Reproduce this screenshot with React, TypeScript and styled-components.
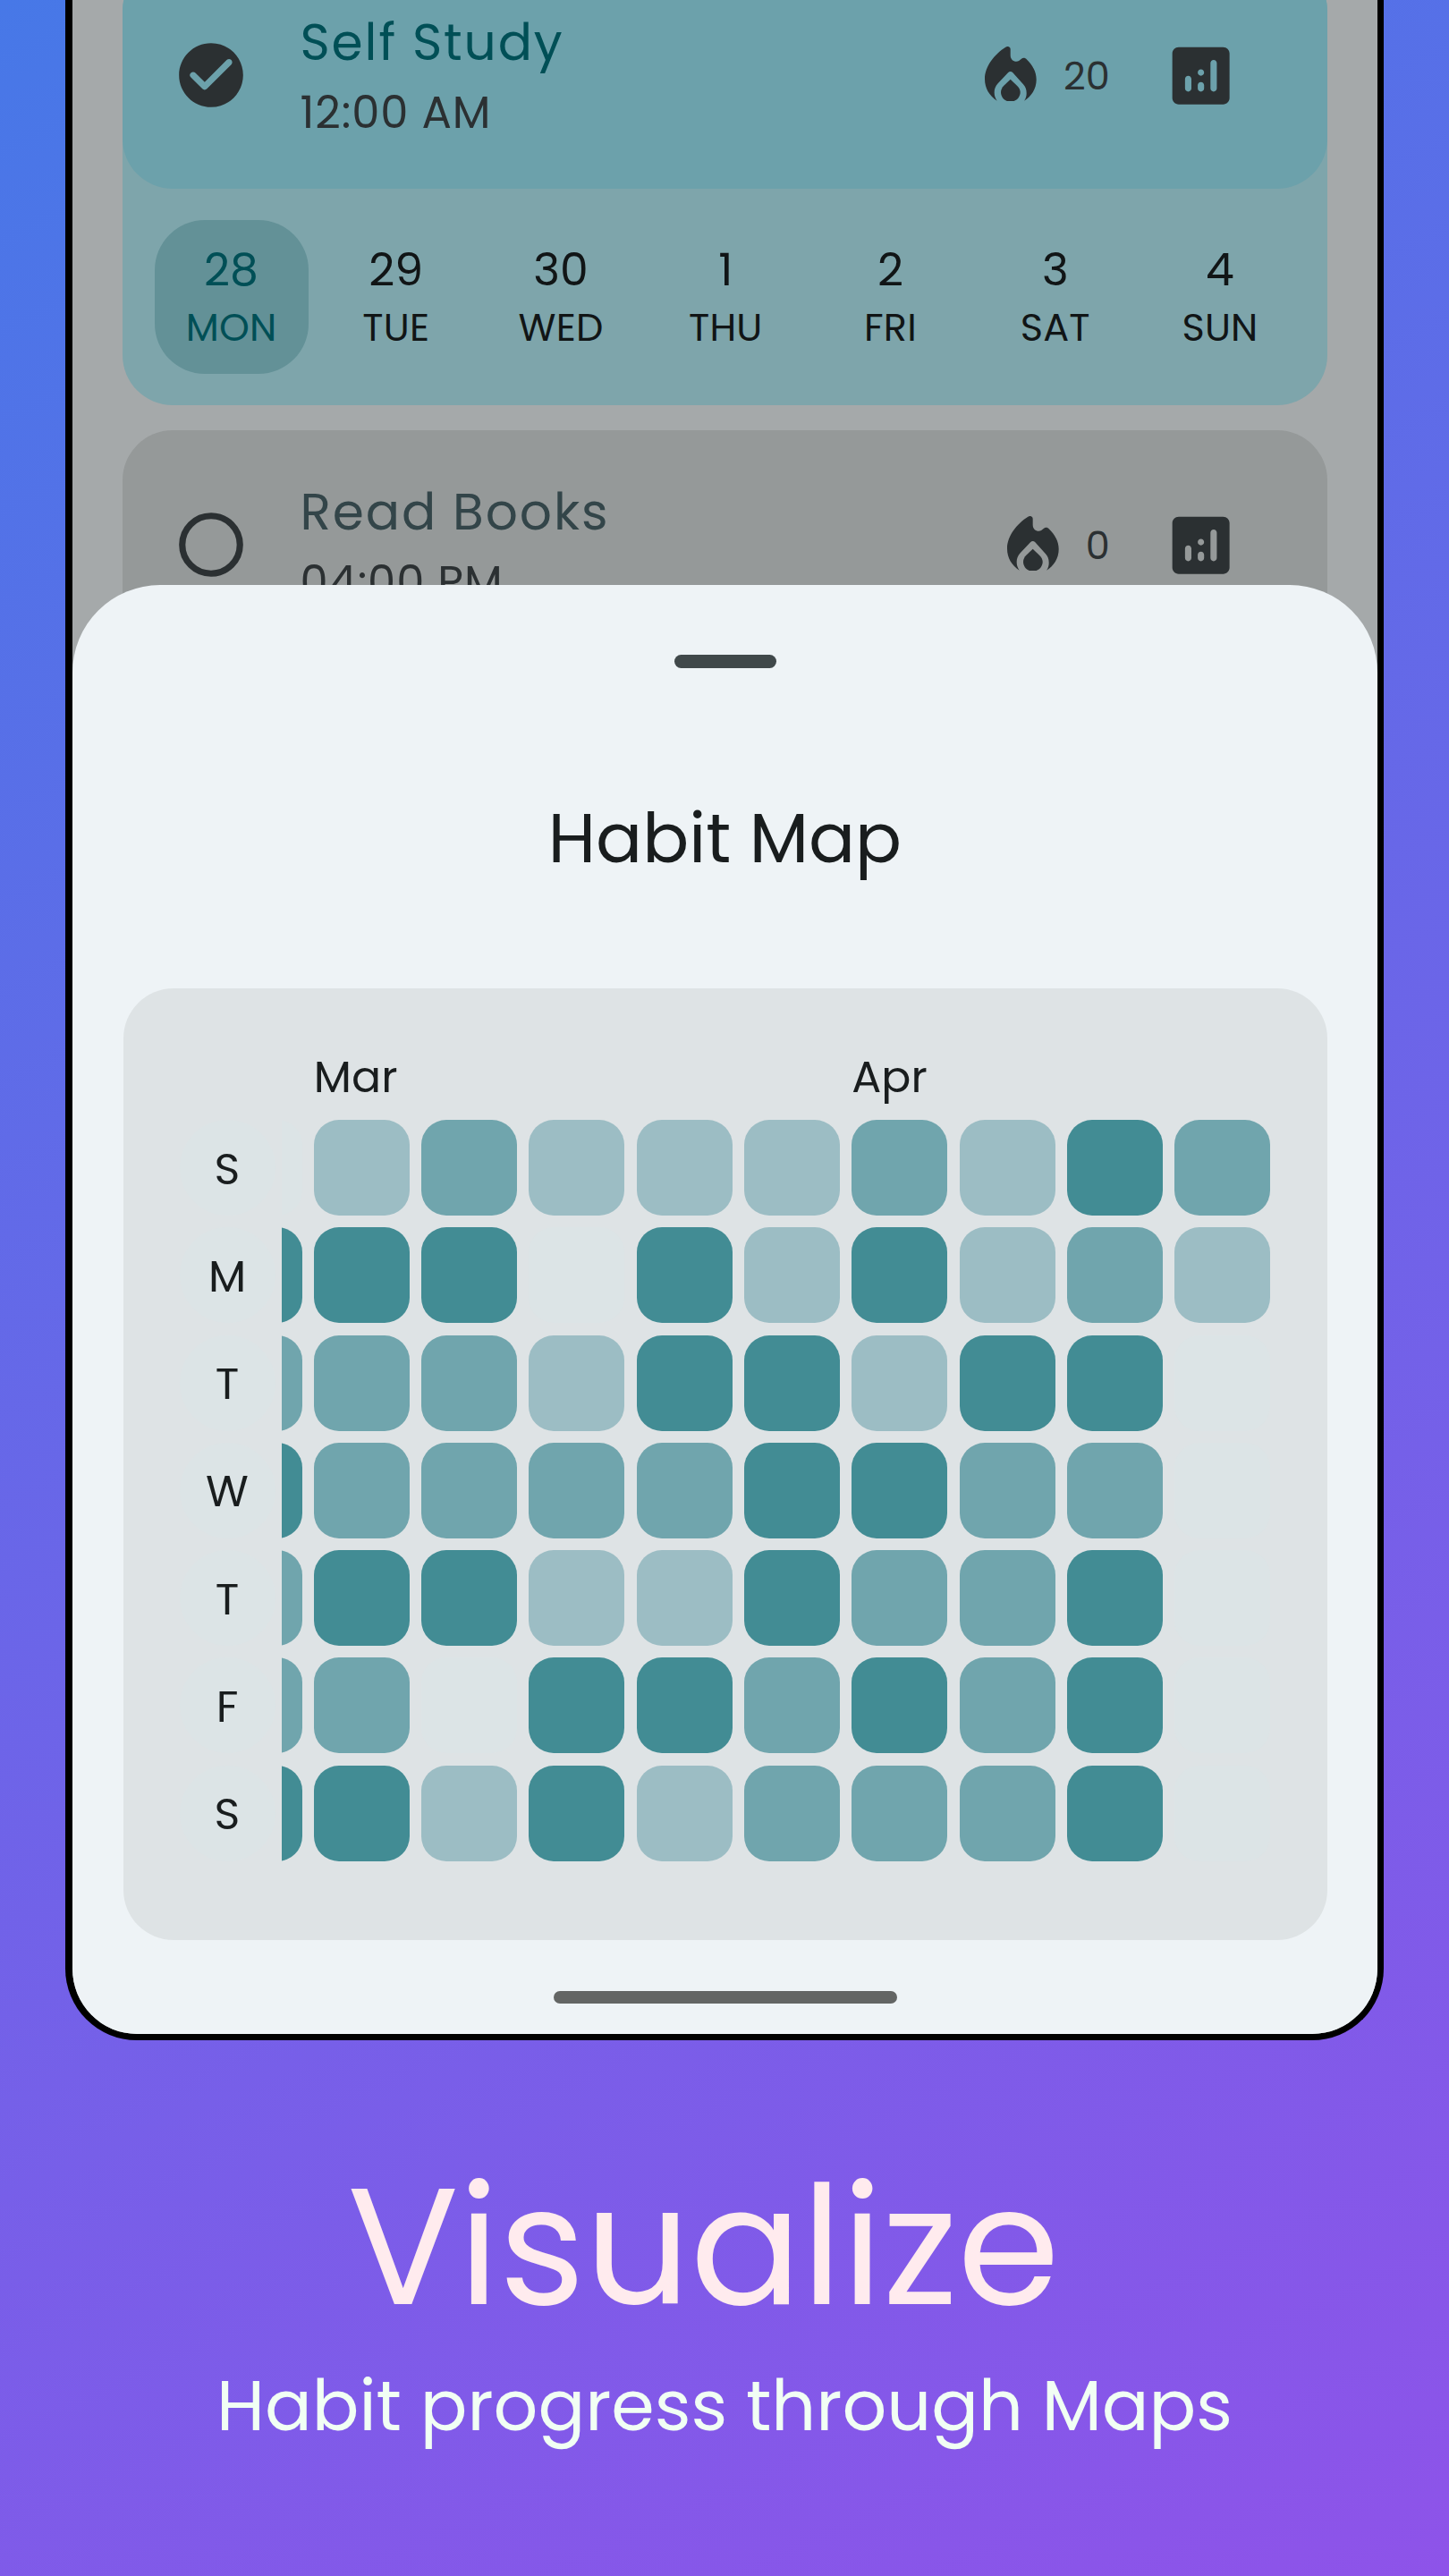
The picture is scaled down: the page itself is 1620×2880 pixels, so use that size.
import React from "react";
import styled, { createGlobalStyle } from "styled-components";

const Global = createGlobalStyle`
  *, *::before, *::after { box-sizing: border-box; }
  body { margin: 0; }
`;

const Poster = styled.main`
  width: 1620px;
  height: 2880px;
  overflow: hidden;
  display: flex;
  flex-direction: column;
  align-items: center;
  background: linear-gradient(155deg, #4778e7, #8e53e9);
  font-family: Poppins, Inter, "Open Sans", sans-serif;
  font-weight: 400;
  white-space: nowrap;
`;

const Phone = styled.section`
  position: relative;
  flex: none;
  width: 1474px;
  height: 2281px;
  border: solid #000;
  border-width: 0 7.5px 7.5px 8px;
  border-radius: 0 0 80px 80px;
  overflow: hidden;
  background: #a5a9aa;
`;

const HabitList = styled.div`
  display: flex;
  flex-direction: column;
  gap: 28px;
  margin: -44px 56px 0;
`;

const HabitGroup = styled.div`
  height: 497px;
  border-radius: 56px;
  background: #7ea5ab;
`;

const HabitCard = styled.div<{ $done?: boolean }>`
  display: flex;
  align-items: center;
  height: 255px;
  padding: 0 99px 0 56px;
  border-radius: 56px;
  background: ${(p) => (p.$done ? "#6ca1ab" : "#959999")};
  color: #2b3032;
`;

const HabitText = styled.div`
  flex: 1;
  padding: 6px 0 0 56.5px;
`;

const HabitName = styled.div<{ $done?: boolean }>`
  font-size: 56.6px;
  line-height: 79px;
  letter-spacing: 1.9px;
  color: ${(p) => (p.$done ? "#004f56" : "#334549")};
`;

const HabitTime = styled.div`
  font-size: 49.6px;
  line-height: 78px;
  letter-spacing: 0.9px;
`;

const Streak = styled.div`
  display: flex;
  align-items: center;
  gap: 30px;
  margin-right: 59px;
  font-size: 43px;

  svg {
    margin-bottom: 2px;
  }
`;

const StreakCount = styled.span`
  padding-top: 2px;
`;

const Days = styled.div`
  display: flex;
  justify-content: space-between;
  padding: 35px 34px 0 35.5px;
`;

const Day = styled.div<{ $active?: boolean }>`
  width: 172px;
  height: 172px;
  padding-top: 22px;
  border-radius: 56px;
  text-align: center;
  background: ${(p) => (p.$active ? "#639197" : "transparent")};
  color: ${(p) => (p.$active ? "#004f56" : "#111516")};
`;

const DayNumber = styled.div`
  font-size: 50.5px;
  line-height: 68px;
`;

const DayName = styled.div`
  font-size: 43px;
  line-height: 61px;
  letter-spacing: 0.2px;
`;

const Sheet = styled.div`
  position: absolute;
  inset: 654px 0 0;
  display: flex;
  flex-direction: column;
  align-items: center;
  padding-top: 78px;
  border-radius: 98px 98px 0 0;
  background: #eef3f6;
  color: #191d1e;
`;

const Handle = styled.div`
  width: 114px;
  height: 15px;
  border-radius: 8px;
  background: #40484a;
`;

const SheetTitle = styled.h2`
  margin: 139px 0 0;
  font-size: 77px;
  line-height: 102px;
  font-weight: 400;
`;

const MapCard = styled.div`
  display: flex;
  gap: 7px;
  width: 1346px;
  height: 1064px;
  margin-top: 117px;
  padding: 59px 63px 0;
  border-radius: 56px;
  background: #dee3e5;
`;

const LabelColumn = styled.div`
  display: flex;
  flex-direction: column;
  gap: 13.3px;
  padding-top: 88px;
`;

const WeekLabel = styled.div`
  display: flex;
  align-items: center;
  justify-content: center;
  width: 107px;
  height: 107px;
  padding-top: 3px;
  border-radius: 50%;
  background: #dce4e6;
  font-size: 49px;
`;

const MapScroller = styled.div`
  display: flex;
  justify-content: flex-end;
  gap: 13.3px;
  width: 1105.7px;
  overflow: hidden;
`;

const WeekColumn = styled.div`
  display: flex;
  flex-direction: column;
  flex: none;
  gap: 13.3px;
  width: 107px;
`;

const MonthLabel = styled.div`
  height: 74.7px;
  line-height: 81px;
  font-size: 49px;
`;

const tones = ["#dce4e6", "#9cbdc4", "#70a5ad", "#428c94"];

const Cell = styled.div<{ $level: number }>`
  height: 107px;
  border-radius: 28px;
  background: ${(p) => tones[p.$level]};
`;

const NavBar = styled.div`
  width: 384px;
  height: 14px;
  margin-top: 57px;
  border-radius: 7px;
  background: #636564;
`;

const Headline = styled.h1`
  margin: 111px 0 0;
  padding-right: 47px;
  font-size: 184px;
  line-height: 240px;
  font-weight: 400;
  color: #ffebee;
`;

const Tagline = styled.p`
  margin: 8px 0 0;
  font-size: 78px;
  line-height: 100px;
  color: #f1fff4;
`;

const CheckIcon = () => (
  <svg width="86" height="86" viewBox="0 0 24 24" fill="currentColor">
    <path d="M12 2C6.48 2 2 6.48 2 12s4.48 10 10 10 10-4.48 10-10S17.52 2 12 2zM9.29 16.29L5.7 12.7a.9959.9959 0 010-1.41c.39-.39 1.02-.39 1.41 0L10 14.17l6.88-6.88c.39-.39 1.02-.39 1.41 0 .39.39.39 1.02 0 1.41l-7.59 7.59c-.38.39-1.02.39-1.41 0z" />
  </svg>
);

const RingIcon = () => (
  <svg width="86" height="86" viewBox="0 0 24 24" fill="none" stroke="currentColor" strokeWidth="2">
    <circle cx="12" cy="12" r="9" />
  </svg>
);

const FlameIcon = () => (
  <svg width="57.7" height="61.7" viewBox="124 94 173 185" fill="currentColor">
    <path d="M165 276C140 260 124 235 124 203C124 160 158 118 194 96C202 91 210 96 210 103V123C210 136 219 144 230 144C236 144 241 141 246 136C252 131 259 131 264 137C284 157 297 178 297 205C297 236 280 262 256 276C262 268 264 260 264 250C264 238 260 229 253 221L218 182C213 177 207 177 202 182L168 218C160 227 156 237 156 248C156 259 159 268 165 276Z" />
    <path d="M210 204L232 225C239 232 243 239 243 247C243 265 228 279 210 279C192 279 178 265 178 247C178 239 182 231 188 225Z" />
  </svg>
);

const StatsIcon = () => (
  <svg width="85.3" height="85.3" viewBox="0 0 24 24" fill="currentColor">
    <path d="M19 3H5c-1.1 0-2 .9-2 2v14c0 1.1.9 2 2 2h14c1.1 0 2-.9 2-2V5c0-1.1-.9-2-2-2zM8 17c-.55 0-1-.45-1-1v-3c0-.55.45-1 1-1s1 .45 1 1v3c0 .55-.45 1-1 1zm4 0c-.55 0-1-.45-1-1v-1c0-.55.45-1 1-1s1 .45 1 1v1c0 .55-.45 1-1 1zm0-5c-.55 0-1-.45-1-1s.45-1 1-1 1 .45 1 1-.45 1-1 1zm4 5c-.55 0-1-.45-1-1V8c0-.55.45-1 1-1s1 .45 1 1v8c0 .55-.45 1-1 1z" />
  </svg>
);

const Stats = styled.div`
  display: flex;
  padding-top: 2px;
`;

interface HabitProps {
  name: string;
  time: string;
  streak: number;
  done?: boolean;
}

const Habit = ({ name, time, streak, done }: HabitProps) => (
  <HabitCard $done={done}>
    {done ? <CheckIcon /> : <RingIcon />}
    <HabitText>
      <HabitName $done={done}>{name}</HabitName>
      <HabitTime>{time}</HabitTime>
    </HabitText>
    <Streak>
      <FlameIcon />
      <StreakCount>{streak}</StreakCount>
    </Streak>
    <Stats>
      <StatsIcon />
    </Stats>
  </HabitCard>
);

const days: [number, string][] = [
  [28, "MON"], [29, "TUE"], [30, "WED"], [1, "THU"], [2, "FRI"], [3, "SAT"], [4, "SUN"],
];

const weekLabels = ["S", "M", "T", "W", "T", "F", "S"];

// One entry per week, Sunday first; level 0 is a day without progress.
const weeks: { month?: string; levels: number[] }[] = [
  { levels: [0, 3, 2, 3, 2, 2, 3] },
  { month: "Mar", levels: [1, 3, 2, 2, 3, 2, 3] },
  { levels: [2, 3, 2, 2, 3, 0, 1] },
  { levels: [1, 0, 1, 2, 1, 3, 3] },
  { levels: [1, 3, 3, 2, 1, 3, 1] },
  { levels: [1, 1, 3, 3, 3, 2, 2] },
  { month: "Apr", levels: [2, 3, 1, 3, 2, 3, 2] },
  { levels: [1, 1, 3, 2, 2, 2, 2] },
  { levels: [3, 2, 3, 2, 3, 3, 3] },
  { levels: [2, 1, 0, 0, 0, 0, 0] },
];

export default function App() {
  return (
    <Poster>
      <Global />
      <Phone>
        <HabitList>
          <HabitGroup>
            <Habit name="Self Study" time="12:00 AM" streak={20} done />
            <Days>
              {days.map(([number, name], i) => (
                <Day key={name} $active={i === 0}>
                  <DayNumber>{number}</DayNumber>
                  <DayName>{name}</DayName>
                </Day>
              ))}
            </Days>
          </HabitGroup>
          <Habit name="Read Books" time="04:00 PM" streak={0} />
        </HabitList>
        <Sheet>
          <Handle />
          <SheetTitle>Habit Map</SheetTitle>
          <MapCard>
            <LabelColumn>
              {weekLabels.map((label, i) => (
                <WeekLabel key={i}>{label}</WeekLabel>
              ))}
            </LabelColumn>
            <MapScroller>
              {weeks.map((week, i) => (
                <WeekColumn key={i}>
                  <MonthLabel>{week.month}</MonthLabel>
                  {week.levels.map((level, d) => (
                    <Cell key={d} $level={level} />
                  ))}
                </WeekColumn>
              ))}
            </MapScroller>
          </MapCard>
          <NavBar />
        </Sheet>
      </Phone>
      <Headline>Visualize</Headline>
      <Tagline>Habit progress through Maps</Tagline>
    </Poster>
  );
}
